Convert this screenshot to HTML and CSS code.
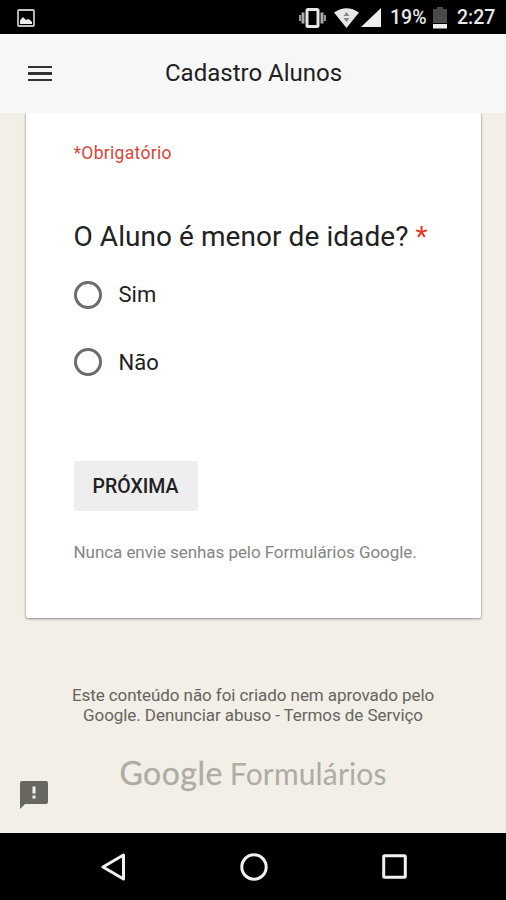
FILE: index.html
```
<!DOCTYPE html>
<html lang="pt-BR">
<head>
    <meta charset="UTF-8">
    <meta name="viewport" content="width=device-width, initial-scale=1.0">
    <title>Cadastro Alunos</title>
    <link rel="stylesheet" href="styles.css">
</head>
<body>
    <div class="status-bar">
        <svg class="icon-picture" width="18" height="18" viewBox="0 0 18 18">
            <rect x="1" y="1" width="16" height="16" rx="1" fill="none" stroke="#c4c4c4" stroke-width="1.8"/>
            <path d="M3 15v-3.500L6 8l3 3 2-1 2 1 2 2v2z" fill="#eee"/>
        </svg>
        <svg class="icon-vibrate" width="27" height="20" viewBox="0 0 27 20">
            <path d="M1 7v6M26 7v6" stroke="#999" stroke-width="2"/>
            <path d="M4 4.500v11M23 4.500v11" stroke="#aaa" stroke-width="3"/>
            <rect x="8" y="1.500" width="11" height="17" rx="1" fill="none" stroke="#e6e6e6" stroke-width="3"/>
        </svg>
        <svg class="icon-wifi" width="25" height="20" viewBox="0 0 25 20">
            <path d="M0 4.500Q12.500-4 25 4.500L12.500 20z" fill="#e8e8e8"/>
            <path d="M12.500 4l3 4h-6zM9.500 10h6l-3 4z" fill="#888"/>
        </svg>
        <svg class="icon-signal" width="20" height="19" viewBox="0 0 20 19">
            <path d="M20 0v19H0z" fill="#eee"/>
        </svg>
        <span class="battery-level">19%</span>
        <svg class="icon-battery" width="14" height="22" viewBox="0 0 14 22">
            <path d="M0 2h4V0h6v2h4v14H0z" fill="#4a4a4a"/>
            <path d="M0 17h14v4.500H0z" fill="#eee"/>
        </svg>
        <span class="clock">2:27</span>
    </div>

    <header class="app-header">
        <button class="menu-button" aria-label="Menu">
            <span></span>
            <span></span>
            <span></span>
        </button>
        <h1>Cadastro Alunos</h1>
    </header>

    <main>
        <form class="form-card">
            <div class="required-note">*Obrigatório</div>
            <h2>O Aluno é menor de idade? <span class="asterisk">*</span></h2>
            <label class="option">
                <input type="radio" name="menor" value="sim">
                <span>Sim</span>
            </label>
            <label class="option">
                <input type="radio" name="menor" value="nao">
                <span>Não</span>
            </label>
            <button type="button" class="next-button">PRÓXIMA</button>
            <p class="warning">Nunca envie senhas pelo Formulários Google.</p>
        </form>

        <footer>
            <p class="disclaimer">Este conteúdo não foi criado nem aprovado pelo<br>Google. Denunciar abuso - Termos de Serviço</p>
            <div class="logo"><span class="logo-google">Google</span><span class="logo-forms">Formulários</span></div>
        </footer>

        <svg class="feedback" width="28" height="28" viewBox="0 0 28 28">
            <path d="M2 0h24a2 2 0 0 1 2 2v19a2 2 0 0 1-2 2H5l-5 5V2a2 2 0 0 1 2-2z" fill="#676661"/>
            <path d="M12.500 5.500h3v7h-3zM12.500 14.500h3v3h-3z" fill="#f2efe7"/>
        </svg>
    </main>

    <nav class="nav-bar">
        <svg width="26" height="28" viewBox="0 0 26 28">
            <path d="M23.500 2v24L3 14z" fill="none" stroke="#f2f2f2" stroke-width="3" stroke-linejoin="round"/>
        </svg>
        <svg width="28" height="28" viewBox="0 0 28 28">
            <circle cx="14" cy="14" r="12.200" fill="none" stroke="#f2f2f2" stroke-width="3"/>
        </svg>
        <svg width="25" height="25" viewBox="0 0 25 25">
            <rect x="1.700" y="1.700" width="21.600" height="21.600" rx="1" fill="none" stroke="#f2f2f2" stroke-width="3"/>
        </svg>
    </nav>
</body>
</html>
```
FILE: styles.css
```
* {
    box-sizing: border-box;
}

body {
    margin: 0;
    height: 900px;
    display: flex;
    flex-direction: column;
    overflow: hidden;
    font-family: Roboto, sans-serif;
    background-color: #f2efe7;
    color: #212121;
}

h1, h2, p {
    margin: 0;
    font-weight: 400;
    white-space: nowrap;
}

.status-bar {
    height: 34px;
    display: flex;
    align-items: center;
    padding: 1px 11px 0 17px;
    background-color: #000;
    color: #e8e8e8;
    font-size: 19.5px;
    font-weight: 500;
}

.icon-picture {
    margin-right: auto;
}

.icon-wifi {
    margin-left: 8px;
}

.icon-signal {
    margin-left: 2px;
}

.battery-level {
    width: 37px;
    margin-left: 9px;
}

.icon-battery {
    margin-left: 6px;
}

.clock {
    width: 38px;
    margin-left: 10px;
}

.app-header {
    position: relative;
    z-index: 1;
    height: 79px;
    display: flex;
    align-items: center;
    padding: 0 0 2px 28px;
    background-color: #f7f7f7;
}

.menu-button {
    display: flex;
    flex-direction: column;
    gap: 4px;
    margin-top: 2px;
    padding: 0;
    border: none;
    background: none;
}

.menu-button span {
    width: 24px;
    height: 2.5px;
    background-color: #333;
}

h1 {
    margin-left: 113px;
    font-size: 24px;
}

main {
    position: relative;
    height: 720px;
}

.form-card {
    width: 455px;
    height: 505px;
    margin-left: 26px;
    padding: 29px 48px 0 47.5px;
    display: flex;
    flex-direction: column;
    align-items: flex-start;
    background-color: #fff;
    border-radius: 0 0 2px 2px;
    box-shadow: 0 0 0 1px rgba(0, 0, 0, 0.08), 0 1px 3px rgba(0, 0, 0, 0.35);
}

.required-note {
    font-size: 17.5px;
    line-height: 22px;
    letter-spacing: 0.3px;
    color: #db4437;
}

h2 {
    margin-top: 55px;
    font-size: 28px;
    line-height: 36px;
    letter-spacing: 0.06px;
}

.asterisk {
    color: #e53a2b;
}

.option {
    height: 28px;
    margin-top: 26px;
    display: flex;
    align-items: center;
    gap: 17px;
    font-size: 22px;
}

.option span {
    margin-top: -1px;
}

.option + .option {
    margin-top: 39px;
}

.option + .option span {
    margin-top: 0;
}

.option input {
    appearance: none;
    width: 28px;
    height: 28px;
    margin: 0;
    border: 3px solid #6c6c6c;
    border-radius: 50%;
}

.next-button {
    width: 124px;
    height: 50px;
    margin-top: 85px;
    padding: 0;
    border: none;
    border-radius: 3px;
    background-color: #eee;
    color: #212121;
    font-family: inherit;
    font-size: 19.5px;
    font-weight: 500;
}

.warning {
    margin-top: 30px;
    font-size: 17px;
    line-height: 22px;
    letter-spacing: -0.06px;
    color: #858585;
}

footer {
    padding-top: 67px;
    text-align: center;
}

.disclaimer {
    font-size: 17px;
    line-height: 20px;
    letter-spacing: -0.07px;
    color: #66645f;
}

.logo {
    height: 40px;
    margin-top: 28px;
    display: flex;
    justify-content: center;
    align-items: baseline;
    gap: 7px;
    color: #aeaca5;
    font-family: Lato, sans-serif;
    font-size: 30px;
    line-height: 40px;
}

.logo-google {
    font-size: 32px;
    letter-spacing: 0.5px;
    -webkit-text-stroke: 0.3px #aeaca5;
}

.logo-forms {
    letter-spacing: 0.15px;
}

.feedback {
    position: absolute;
    left: 20px;
    bottom: 24px;
}

.nav-bar {
    height: 67px;
    display: flex;
    justify-content: center;
    align-items: center;
    gap: 114px;
    background-color: #000;
}
```
